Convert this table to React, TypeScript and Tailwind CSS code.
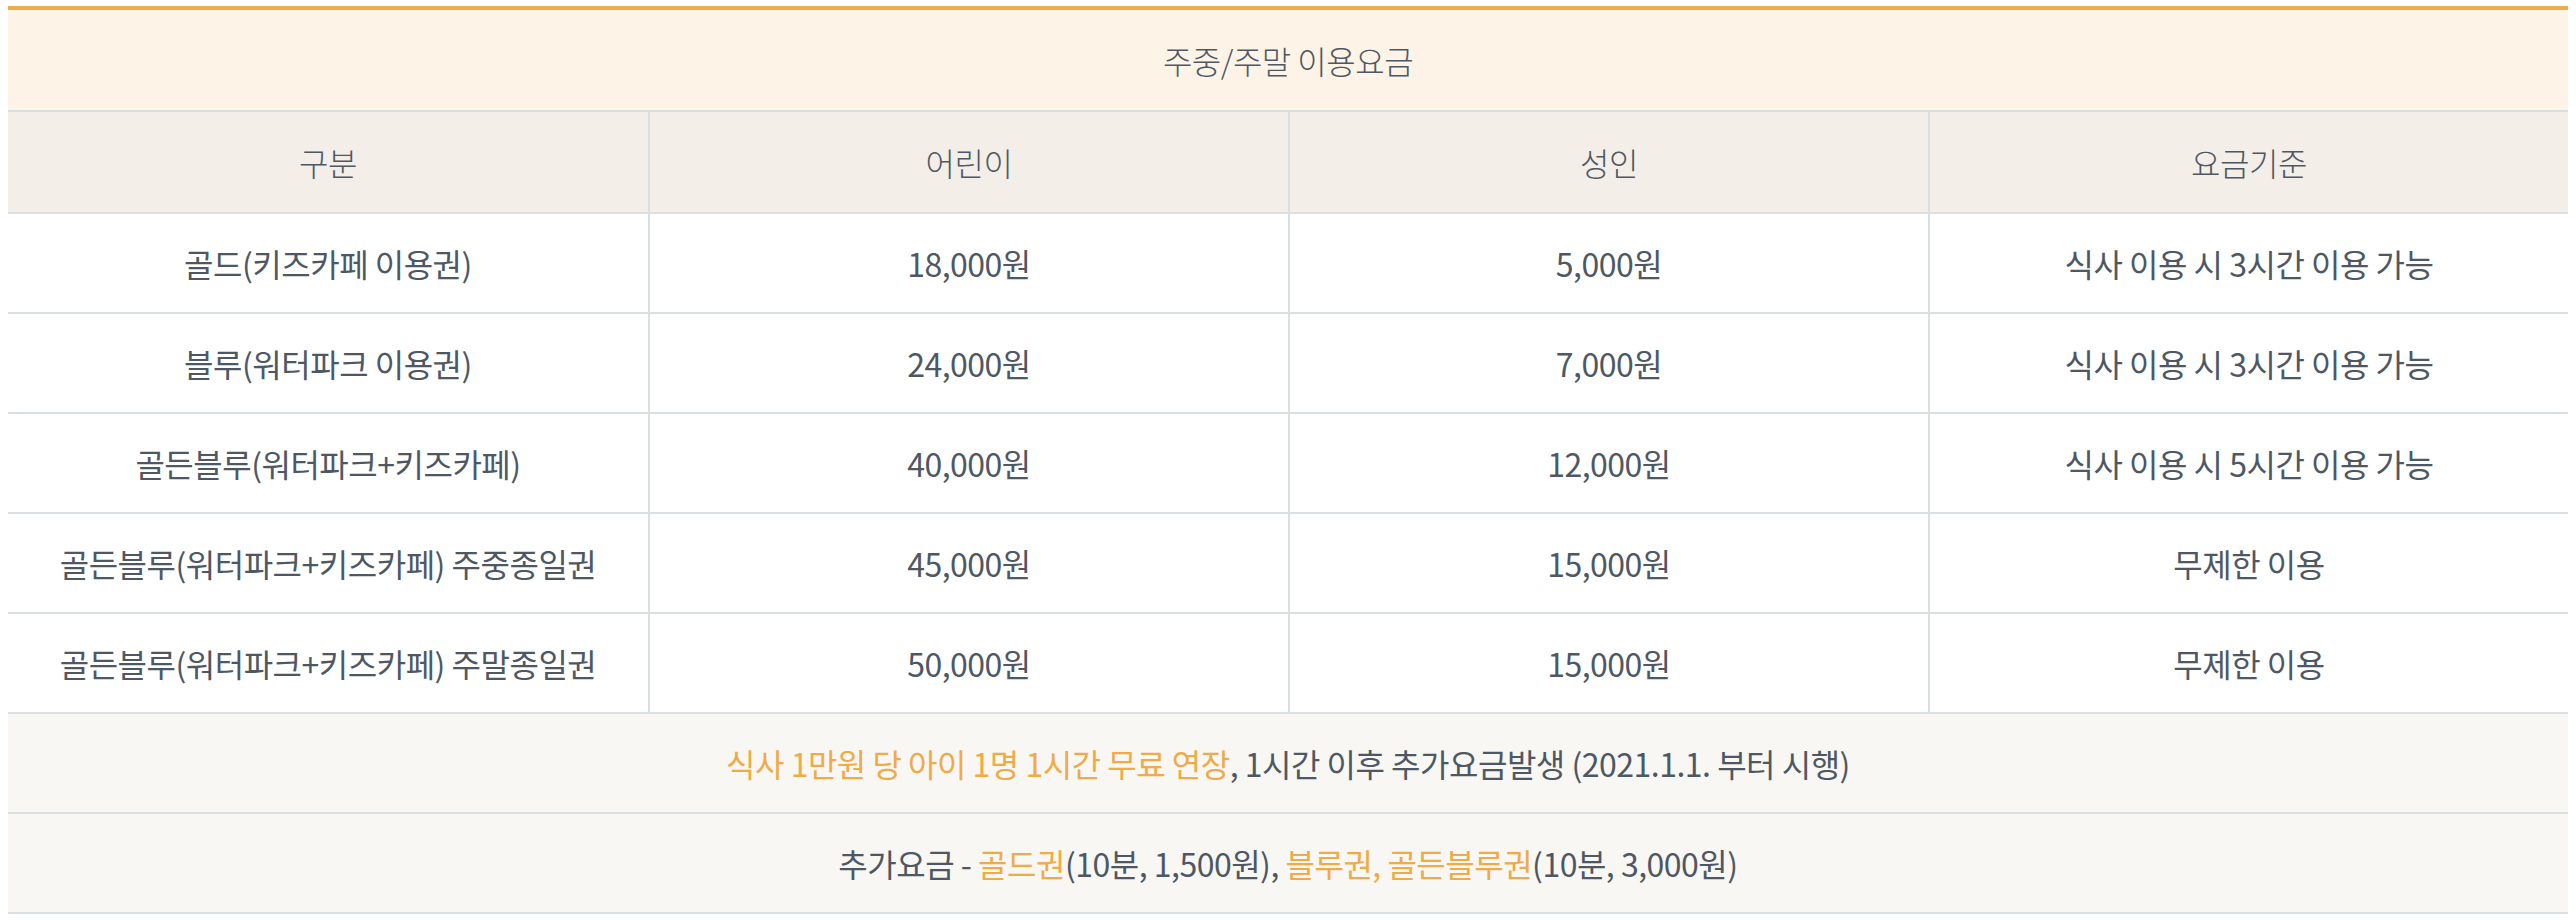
const rows = [
  { name: "골드(키즈카페 이용권)", kid: "18,000원", adult: "5,000원", rule: "식사 이용 시 3시간 이용 가능" },
  { name: "블루(워터파크 이용권)", kid: "24,000원", adult: "7,000원", rule: "식사 이용 시 3시간 이용 가능" },
  { name: "골든블루(워터파크+키즈카페)", kid: "40,000원", adult: "12,000원", rule: "식사 이용 시 5시간 이용 가능" },
  { name: "골든블루(워터파크+키즈카페) 주중종일권", kid: "45,000원", adult: "15,000원", rule: "무제한 이용" },
  { name: "골든블루(워터파크+키즈카페) 주말종일권", kid: "50,000원", adult: "15,000원", rule: "무제한 이용" },
];

const heads = ["구분", "어린이", "성인", "요금기준"];

export default function App() {
  return (
    <div
      className="bg-white min-h-[920px] px-[8px] pt-[6px] text-[32px] text-[#4e5864] tracking-[-0.5px]"
      style={{ fontFamily: '"Noto Sans CJK KR", "Noto Sans", sans-serif' }}
    >
      <div className="border-t-4 border-[#eeac4a]">
        <div className="h-[102px] flex items-center justify-center bg-[#fdf4e7] border-b-2 border-[#d9dfe3] font-light">
          주중/주말 이용요금
        </div>

        <div className="grid grid-cols-4 h-[102px] bg-[#f3eee8] border-b-2 border-[#d9dfe3] font-light">
          {heads.map((h, i) => (
            <div
              key={h}
              className={"flex items-center justify-center " + (i > 0 ? "border-l-2 border-[#d9dfe3]" : "")}
            >
              {h}
            </div>
          ))}
        </div>

        {rows.map((r) => (
          <div key={r.name} className="grid grid-cols-4 h-[100px] border-b-2 border-[#d9dfe3]">
            <div className="flex items-center justify-center">{r.name}</div>
            <div className="flex items-center justify-center border-l-2 border-[#d9dfe3]">{r.kid}</div>
            <div className="flex items-center justify-center border-l-2 border-[#d9dfe3]">{r.adult}</div>
            <div className="flex items-center justify-center border-l-2 border-[#d9dfe3]">{r.rule}</div>
          </div>
        ))}

        <div className="h-[100px] flex items-center justify-center bg-[#f8f7f3] border-b-2 border-[#d9dfe3]">
          <p>
            <span className="text-[#efab47]">식사 1만원 당 아이 1명 1시간 무료 연장</span>, 1시간 이후 추가요금발생 (2021.1.1. 부터 시행)
          </p>
        </div>
        <div className="h-[100px] flex items-center justify-center bg-[#f8f7f3] border-b-2 border-[#d9dfe3]">
          <p>
            추가요금 - <span className="text-[#efab47]">골드권</span>(10분, 1,500원),{" "}
            <span className="text-[#efab47]">블루권, 골든블루권</span>(10분, 3,000원)
          </p>
        </div>
      </div>
    </div>
  );
}
